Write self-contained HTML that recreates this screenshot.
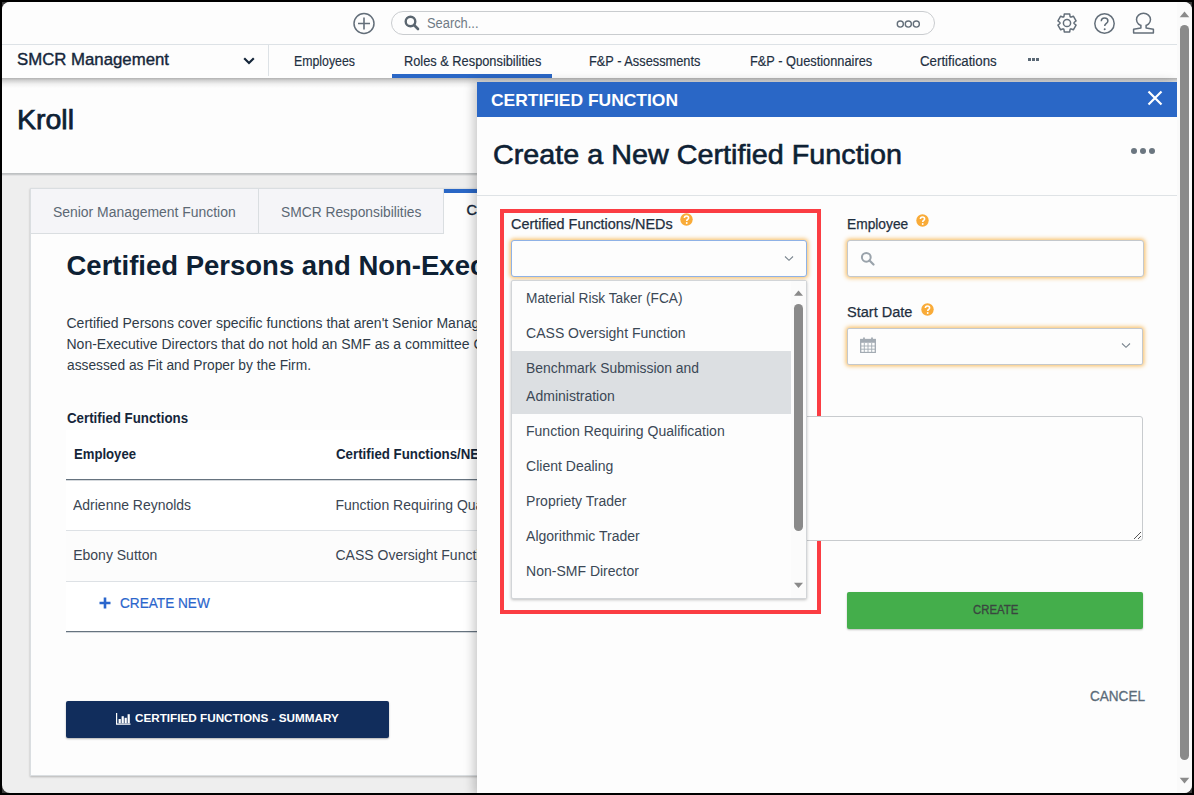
<!DOCTYPE html>
<html><head><meta charset="utf-8">
<style>
html,body{margin:0;padding:0;background:#000;width:1194px;height:795px;overflow:hidden;}
*{box-sizing:border-box;}
#frame{position:absolute;left:2px;top:2px;width:1190px;height:791px;border-radius:8px;overflow:hidden;background:#eeeeee;}
#root{position:absolute;left:-2px;top:-2px;width:1194px;height:795px;font-family:"Liberation Sans",sans-serif;}
.abs{position:absolute;}
.tx{position:absolute;white-space:nowrap;transform-origin:0 0;font-family:"Liberation Sans",sans-serif;}
</style></head>
<body>
<div style="position:absolute;left:2px;top:2px;width:8px;height:8px;background:#3c3c3c"></div>
<div style="position:absolute;left:1184px;top:2px;width:8px;height:8px;background:#3c3c3c"></div>
<div style="position:absolute;left:2px;top:785px;width:8px;height:8px;background:#3c3c3c"></div>
<div style="position:absolute;left:1184px;top:785px;width:8px;height:8px;background:#3c3c3c"></div>
<div id="frame"><div id="root">
  <!-- top header -->
  <div class="abs" style="left:0;top:0;width:1177px;height:78px;background:#fdfdfd;"></div>
  <div class="abs" style="left:0;top:44px;width:1177px;height:1px;background:#dde2e6;"></div>
  <!-- page header -->
  <div class="abs" style="left:0;top:78px;width:1177px;height:95px;background:#fdfdfd;"></div>
  <div class="abs" style="left:0;top:173px;width:1177px;height:3px;background:linear-gradient(#b9bcbe,#c9cbcc 50%,#eeeeee);"></div>
  <!-- nav shadow -->
  <div class="abs" style="left:0;top:78px;width:1177px;height:10px;background:linear-gradient(rgba(0,0,0,.3),rgba(0,0,0,.17) 25%,rgba(0,0,0,.05) 60%,rgba(0,0,0,0));"></div>
  <!-- plus icon -->
  <svg class="abs" style="left:352px;top:12px" width="24" height="24" viewBox="0 0 24 24">
    <circle cx="12" cy="11.5" r="10" fill="none" stroke="#646f7a" stroke-width="1.5"/>
    <path d="M12 5.5V17.5M6 11.5H18" stroke="#646f7a" stroke-width="1.6"/>
  </svg>
  <!-- search bar -->
  <div class="abs" style="left:391px;top:11px;width:544px;height:24px;border:1px solid #c9cccf;border-radius:12px;background:#fdfdfd;"></div>
  <svg class="abs" style="left:404px;top:15px" width="16" height="16" viewBox="0 0 16 16">
    <circle cx="6.5" cy="6.5" r="4.8" fill="none" stroke="#5b6670" stroke-width="2.4"/>
    <path d="M10 10L14 14" stroke="#5b6670" stroke-width="2.6" stroke-linecap="round"/>
  </svg>
  <svg class="abs" style="left:896px;top:20px" width="26" height="9" viewBox="0 0 26 9">
    <circle cx="4.3" cy="4" r="3.05" fill="none" stroke="#646f7a" stroke-width="1.35"/>
    <circle cx="12.3" cy="4" r="3.05" fill="none" stroke="#646f7a" stroke-width="1.35"/>
    <circle cx="20.3" cy="4" r="3.05" fill="none" stroke="#646f7a" stroke-width="1.35"/>
  </svg>
  <!-- gear -->
  <svg class="abs" style="left:1055.7px;top:12.2px" width="22" height="22" viewBox="0 0 22 22">
    <path d="M7.99 4.24 L8.28 2.11 L13.72 2.11 L14.01 4.24 Q14.25 5.37 15.35 5.01 L17.34 4.20 L20.06 8.91 L18.36 10.23 Q17.50 11.00 18.36 11.77 L20.06 13.09 L17.34 17.80 L15.35 16.99 Q14.25 16.63 14.01 17.76 L13.72 19.89 L8.28 19.89 L7.99 17.76 Q7.75 16.63 6.65 16.99 L4.66 17.80 L1.94 13.09 L3.64 11.77 Q4.50 11.00 3.64 10.23 L1.94 8.91 L4.66 4.20 L6.65 5.01 Q7.75 5.37 7.99 4.24Z" fill="none" stroke="#646f7a" stroke-width="1.5" stroke-linejoin="round"/>
    <circle cx="11" cy="11" r="3.6" fill="none" stroke="#646f7a" stroke-width="1.5"/>
  </svg>
  <!-- help -->
  <svg class="abs" style="left:1093px;top:12px" width="23" height="23" viewBox="0 0 23 23">
    <circle cx="11.5" cy="11.5" r="9.7" fill="none" stroke="#646f7a" stroke-width="1.5"/>
    <path d="M8.3 9.2c0-2 1.4-3.3 3.3-3.3s3.3 1.2 3.3 3c0 2.6-3.2 2.4-3.2 5.2" fill="none" stroke="#5f6b76" stroke-width="1.5"/>
    <circle cx="11.7" cy="17.2" r="1" fill="#5f6b76"/>
  </svg>
  <!-- user -->
  <svg class="abs" style="left:1132px;top:12px" width="23" height="23" viewBox="0 0 23 23">
    <path d="M8.5 17.3c-2-1.2-3.2-3.4-3.2-6 0-3.8 2.7-10.2 6.2-10.2s6.2 2.4 6.2 6.2c0 2.8-1.2 4.8-3.2 6v1.1l5.5 1.2v5.5H1.2v-5.5l7.3-1.2z" fill="none" stroke="none"/>
    <ellipse cx="11.5" cy="7.6" rx="7" ry="6.4" fill="none" stroke="#646f7a" stroke-width="1.5"/>
    <path d="M8.9 13v3L1.6 17.2v3.7h19.8v-3.7l-7.3-1.2V13" fill="#fdfdfd" stroke="#646f7a" stroke-width="1.5" stroke-linejoin="round"/>
  </svg>
  <!-- nav -->
  <svg class="abs" style="left:243px;top:57px" width="12" height="8" viewBox="0 0 12 8">
    <path d="M1.2 1.3L6 6L10.8 1.3" fill="none" stroke="#15263a" stroke-width="2.2"/>
  </svg>
  <div class="abs" style="left:268px;top:45px;width:1px;height:31px;background:#dde2e6;"></div>
  <div class="abs" style="left:392px;top:74px;width:160px;height:4px;background:#2a67c6;"></div>
  <div class="abs" style="left:1028px;top:58px;width:3px;height:3px;background:#5a6875;"></div>
  <div class="abs" style="left:1032px;top:58px;width:3px;height:3px;background:#5a6875;"></div>
  <div class="abs" style="left:1036px;top:58px;width:3px;height:3px;background:#5a6875;"></div>

  <!-- card -->
  <div class="abs" style="left:30px;top:188px;width:600px;height:588px;background:#fdfdfd;border:1px solid #dadee1;box-shadow:0 1px 2px rgba(0,0,0,.25);"></div>
  <div class="abs" style="left:31px;top:189px;width:413px;height:45px;background:#f5f5f8;border-bottom:1px solid #dadee1;"></div>
  <div class="abs" style="left:258px;top:189px;width:1px;height:45px;background:#dadee1;"></div>
  <div class="abs" style="left:443px;top:189px;width:1px;height:45px;background:#dadee1;"></div>
  <div class="abs" style="left:444px;top:189px;width:200px;height:4px;background:#2a67c6;"></div>
  <!-- table -->
  <div class="abs" style="left:66px;top:430px;width:500px;height:201px;background:#ffffff;"></div>
  <div class="abs" style="left:66px;top:479px;width:500px;height:1px;background:#66737f;"></div><div class="abs" style="left:66px;top:480px;width:500px;height:1px;background:#d5d9dd;"></div>
  <div class="abs" style="left:66px;top:530px;width:500px;height:1px;background:#dde1e5;"></div>
  <div class="abs" style="left:66px;top:530px;width:500px;height:51px;background:#fcfcfc;"></div>
  <div class="abs" style="left:66px;top:530px;width:500px;height:1px;background:#dde1e5;"></div>
  <div class="abs" style="left:66px;top:581px;width:500px;height:1px;background:#dde1e5;"></div>
  <div class="abs" style="left:66px;top:631px;width:500px;height:1px;background:#66737f;"></div><div class="abs" style="left:66px;top:632px;width:500px;height:1px;background:#d5d9dd;"></div>
  <svg class="abs" style="left:99px;top:597px" width="12" height="12" viewBox="0 0 12 12">
    <path d="M6 0.5V11.5M0.5 6H11.5" stroke="#2b66cc" stroke-width="2.6"/>
  </svg>
  <!-- summary button -->
  <div class="abs" style="left:66px;top:701px;width:323px;height:37px;background:#112d5c;border-radius:2px;box-shadow:0 1px 2px rgba(0,0,0,.3);"></div>
  <svg class="abs" style="left:115.5px;top:712.5px" width="15" height="12" viewBox="0 0 15 12">
    <path d="M0.6 0V11.1H14.5" fill="none" stroke="#fff" stroke-width="1.2"/>
    <rect x="2.6" y="6" width="2.2" height="4.3" fill="#fff"/>
    <rect x="5.6" y="3.2" width="2.2" height="7.1" fill="#fff"/>
    <rect x="8.6" y="4.8" width="2.2" height="5.5" fill="#fff"/>
    <rect x="11.6" y="1.2" width="2.2" height="9.1" fill="#fff"/>
  </svg>
<div class='tx' style='left:426.5px;top:16.15px;font-size:14px;line-height:14px;font-weight:400;color:#6f7a85;transform:scaleX(0.9191);'>Search...</div>
<div class='tx' style='left:17.0px;top:50.77px;font-size:17.4px;line-height:17.4px;font-weight:400;color:#15263a;transform:scaleX(0.9648);-webkit-text-stroke:0.4px #15263a;'>SMCR Management</div>
<div class='tx' style='left:293.5px;top:54.15px;font-size:14px;line-height:14px;font-weight:400;color:#1f3042;transform:scaleX(0.8807);-webkit-text-stroke:0.18px #1f3042;'>Employees</div>
<div class='tx' style='left:403.5px;top:54.15px;font-size:14px;line-height:14px;font-weight:400;color:#1f3042;transform:scaleX(0.9142);-webkit-text-stroke:0.18px #1f3042;'>Roles &amp; Responsibilities</div>
<div class='tx' style='left:589.0px;top:54.15px;font-size:14px;line-height:14px;font-weight:400;color:#1f3042;transform:scaleX(0.9138);-webkit-text-stroke:0.18px #1f3042;'>F&amp;P - Assessments</div>
<div class='tx' style='left:749.5px;top:54.15px;font-size:14px;line-height:14px;font-weight:400;color:#1f3042;transform:scaleX(0.9147);-webkit-text-stroke:0.18px #1f3042;'>F&amp;P - Questionnaires</div>
<div class='tx' style='left:920.3px;top:54.15px;font-size:14px;line-height:14px;font-weight:400;color:#1f3042;transform:scaleX(0.9478);-webkit-text-stroke:0.18px #1f3042;'>Certifications</div>
<div class='tx' style='left:17.0px;top:104.87px;font-size:28.5px;line-height:28.5px;font-weight:400;color:#0e2134;transform:scaleX(0.9997);-webkit-text-stroke:0.75px #0e2134;'>Kroll</div>
<div class='tx' style='left:52.5px;top:204.75px;font-size:14px;line-height:14px;font-weight:400;color:#5c6874;transform:scaleX(0.9947);'>Senior Management Function</div>
<div class='tx' style='left:281.0px;top:204.75px;font-size:14px;line-height:14px;font-weight:400;color:#5c6874;transform:scaleX(0.9853);'>SMCR Responsibilities</div>
<div class='tx' style='left:466.5px;top:203.33px;font-size:14.5px;line-height:14.5px;font-weight:400;color:#15263a;-webkit-text-stroke:0.45px #15263a;'>Certified Persons and Non-Executive Directors</div>
<div class='tx' style='left:66.5px;top:252.32px;font-size:27.5px;line-height:27.5px;font-weight:700;color:#0e2134;'>Certified Persons and Non-Executive Directors</div>
<div class='tx' style='left:66.5px;top:316.15px;font-size:14px;line-height:14px;font-weight:400;color:#2f3b48;'>Certified Persons cover specific functions that aren't Senior Management Functions</div>
<div class='tx' style='left:66.5px;top:337.15px;font-size:14px;line-height:14px;font-weight:400;color:#2f3b48;'>Non-Executive Directors that do not hold an SMF as a committee Chair must also be</div>
<div class='tx' style='left:66.5px;top:358.15px;font-size:14px;line-height:14px;font-weight:400;color:#2f3b48;transform:scaleX(0.9830);'>assessed as Fit and Proper by the Firm.</div>
<div class='tx' style='left:66.5px;top:410.75px;font-size:14px;line-height:14px;font-weight:700;color:#15263a;transform:scaleX(0.9493);'>Certified Functions</div>
<div class='tx' style='left:73.5px;top:447.15px;font-size:14px;line-height:14px;font-weight:700;color:#15263a;transform:scaleX(0.9374);'>Employee</div>
<div class='tx' style='left:335.5px;top:447.15px;font-size:14px;line-height:14px;font-weight:700;color:#15263a;transform:scaleX(0.9491);'>Certified Functions/NEDs</div>
<div class='tx' style='left:73.2px;top:498.35px;font-size:14px;line-height:14px;font-weight:400;color:#3a4552;transform:scaleX(0.9983);'>Adrienne Reynolds</div>
<div class='tx' style='left:335.5px;top:498.35px;font-size:14px;line-height:14px;font-weight:400;color:#3a4552;'>Function Requiring Qualification</div>
<div class='tx' style='left:73.2px;top:548.45px;font-size:14px;line-height:14px;font-weight:400;color:#3a4552;'>Ebony Sutton</div>
<div class='tx' style='left:335.5px;top:548.45px;font-size:14px;line-height:14px;font-weight:400;color:#3a4552;'>CASS Oversight Function</div>
<div class='tx' style='left:119.6px;top:595.73px;font-size:14.5px;line-height:14.5px;font-weight:400;color:#2b66cc;transform:scaleX(0.9392);-webkit-text-stroke:0.2px #2b66cc;'>CREATE NEW</div>
<div class='tx' style='left:135.0px;top:713.01px;font-size:11.8px;line-height:11.8px;font-weight:700;color:#ffffff;transform:scaleX(0.9924);'>CERTIFIED FUNCTIONS - SUMMARY</div>

  <!-- modal -->
  <div class="abs" style="left:477px;top:82px;width:700px;height:713px;background:#fdfdfd;box-shadow:-3px 0 10px rgba(0,0,0,.22);"></div>
  <div class="abs" style="left:477px;top:82px;width:700px;height:35px;background:#2a67c6;"></div>
  <svg class="abs" style="left:1147px;top:90px" width="16" height="16" viewBox="0 0 16 16">
    <path d="M1.5 1.5L14.5 14.5M14.5 1.5L1.5 14.5" stroke="#fff" stroke-width="2.2"/>
  </svg>
  <svg class="abs" style="left:1130px;top:147px" width="26" height="8" viewBox="0 0 26 8">
    <circle cx="4" cy="4" r="3" fill="#6b7680"/><circle cx="13" cy="4" r="3" fill="#6b7680"/><circle cx="22" cy="4" r="3" fill="#6b7680"/>
  </svg>
  <div class="abs" style="left:477px;top:195px;width:700px;height:1px;background:#dfe3e6;"></div>

  <!-- red box -->
  <div class="abs" style="left:500px;top:209px;width:321px;height:405px;border:4px solid #fb3d43;"></div>
  <!-- help icons -->
  <svg class="abs" style="left:680px;top:213.4px" width="13" height="13" viewBox="0 0 13 13">
    <circle cx="6.5" cy="6.5" r="6.2" fill="#f9ab38"/>
    <path d="M4.4 5.1c0-1.3.9-2.1 2.1-2.1s2.1.8 2.1 1.9c0 1.5-1.9 1.5-1.9 3" fill="none" stroke="#fff" stroke-width="1.6"/>
    <circle cx="6.7" cy="10" r=".95" fill="#fff"/>
  </svg>
  <svg class="abs" style="left:915.5px;top:213.5px" width="13" height="13" viewBox="0 0 13 13">
    <circle cx="6.5" cy="6.5" r="6.2" fill="#f9ab38"/>
    <path d="M4.4 5.1c0-1.3.9-2.1 2.1-2.1s2.1.8 2.1 1.9c0 1.5-1.9 1.5-1.9 3" fill="none" stroke="#fff" stroke-width="1.6"/>
    <circle cx="6.7" cy="10" r=".95" fill="#fff"/>
  </svg>
  <svg class="abs" style="left:920.5px;top:302.5px" width="13" height="13" viewBox="0 0 13 13">
    <circle cx="6.5" cy="6.5" r="6.2" fill="#f9ab38"/>
    <path d="M4.4 5.1c0-1.3.9-2.1 2.1-2.1s2.1.8 2.1 1.9c0 1.5-1.9 1.5-1.9 3" fill="none" stroke="#fff" stroke-width="1.6"/>
    <circle cx="6.7" cy="10" r=".95" fill="#fff"/>
  </svg>
  <!-- select input -->
  <div class="abs" style="left:511px;top:240px;width:296px;height:37px;border:1px solid #8fb2e6;border-radius:3px;background:#fdfdfd;box-shadow:0 0 4px 1px rgba(247,170,50,.8);"></div>
  <svg class="abs" style="left:784px;top:255px" width="10" height="7" viewBox="0 0 10 7">
    <path d="M1 1.5L5 5.3L9 1.5" fill="none" stroke="#77828c" stroke-width="1.05"/>
  </svg>
  <!-- employee input -->
  <div class="abs" style="left:847px;top:240px;width:297px;height:37px;border:1px solid #c4c8cc;border-radius:3px;background:#fdfdfd;box-shadow:0 0 4px 1px rgba(247,170,50,.8);"></div>
  <svg class="abs" style="left:860px;top:251px" width="16" height="15" viewBox="0 0 16 15">
    <circle cx="6.3" cy="6.3" r="4.4" fill="none" stroke="#9aa3ab" stroke-width="2"/>
    <path d="M9.5 9.5L13.5 13.5" stroke="#9aa3ab" stroke-width="2.2" stroke-linecap="round"/>
  </svg>
  <!-- date input -->
  <div class="abs" style="left:847px;top:328px;width:296px;height:37px;border:1px solid #c4c8cc;border-radius:2px;background:#fdfdfd;box-shadow:0 0 4px 1px rgba(247,170,50,.8);"></div>
  <svg class="abs" style="left:860px;top:337px" width="16" height="16" viewBox="0 0 16 16">
    <rect x="0.7" y="2.5" width="14.6" height="13" fill="none" stroke="#a3abb3" stroke-width="1.3"/>
    <rect x="0.7" y="2.5" width="14.6" height="3.3" fill="#a3abb3"/>
    <path d="M4 0.5V4M12 0.5V4" stroke="#a3abb3" stroke-width="1.8"/>
    <path d="M4.3 6v9.5M8 6v9.5M11.7 6v9.5M0.7 9H15.3M0.7 12.2H15.3" stroke="#a3abb3" stroke-width="0.9"/>
  </svg>
  <svg class="abs" style="left:1121px;top:342px" width="10" height="7" viewBox="0 0 10 7">
    <path d="M1 1.5L5 5.3L9 1.5" fill="none" stroke="#77828c" stroke-width="1.05"/>
  </svg>
  <!-- textarea -->
  <div class="abs" style="left:511px;top:416px;width:632px;height:125px;border:1px solid #c8cbce;border-radius:3px;background:#fdfdfd;"></div>
  <svg class="abs" style="left:1132px;top:530px" width="10" height="10" viewBox="0 0 10 10">
    <path d="M9 2L2 9M9 6L6 9" stroke="#555" stroke-width="1"/>
  </svg>
  <!-- dropdown list -->
  <div class="abs" style="left:511px;top:280px;width:296px;height:319px;border:1px solid #d2d5d8;border-radius:2px;background:#fdfdfd;box-shadow:0 1px 3px rgba(0,0,0,.25);"></div>
  <div class="abs" style="left:512px;top:351px;width:279px;height:63px;background:#dcdfe2;"></div>
  <div class="abs" style="left:791px;top:281px;width:15px;height:317px;background:#fbfbfb;"></div>
  <svg class="abs" style="left:793px;top:290px" width="11" height="7" viewBox="0 0 11 7"><path d="M5.5 0.5L10 5.8H1z" fill="#8a8a8a"/></svg>
  <div class="abs" style="left:794px;top:304px;width:9px;height:227px;border-radius:4.5px;background:#8a8a8a;"></div>
  <svg class="abs" style="left:793px;top:582px" width="11" height="7" viewBox="0 0 11 7"><path d="M1 0.8H10L5.5 6z" fill="#8a8a8a"/></svg>
  <!-- create button -->
  <div class="abs" style="left:847px;top:592px;width:296px;height:37px;background:#44ae4b;border-radius:2px;box-shadow:0 1px 2px rgba(0,0,0,.25);"></div>
<div class='tx' style='left:491.2px;top:92.41px;font-size:17px;line-height:17px;font-weight:700;color:#ffffff;transform:scaleX(1.0259);'>CERTIFIED FUNCTION</div>
<div class='tx' style='left:492.5px;top:141.32px;font-size:27.5px;line-height:27.5px;font-weight:400;color:#0e2134;transform:scaleX(1.0452);-webkit-text-stroke:0.6px #0e2134;'>Create a New Certified Function</div>
<div class='tx' style='left:511.2px;top:217.05px;font-size:14px;line-height:14px;font-weight:400;color:#1f2f40;transform:scaleX(1.0282);-webkit-text-stroke:0.25px #1f2f40;'>Certified Functions/NEDs</div>
<div class='tx' style='left:847.2px;top:217.45px;font-size:14px;line-height:14px;font-weight:400;color:#1f2f40;transform:scaleX(0.9829);-webkit-text-stroke:0.25px #1f2f40;'>Employee</div>
<div class='tx' style='left:847.2px;top:305.15px;font-size:14px;line-height:14px;font-weight:400;color:#1f2f40;transform:scaleX(1.0376);-webkit-text-stroke:0.25px #1f2f40;'>Start Date</div>
<div class='tx' style='left:526.1px;top:291.45px;font-size:14px;line-height:14px;font-weight:400;color:#3b4856;transform:scaleX(0.9781);'>Material Risk Taker (FCA)</div>
<div class='tx' style='left:526.1px;top:326.45px;font-size:14px;line-height:14px;font-weight:400;color:#3b4856;'>CASS Oversight Function</div>
<div class='tx' style='left:526.1px;top:361.15px;font-size:14px;line-height:14px;font-weight:400;color:#3b4856;transform:scaleX(0.9925);'>Benchmark Submission and</div>
<div class='tx' style='left:526.1px;top:389.15px;font-size:14px;line-height:14px;font-weight:400;color:#3b4856;'>Administration</div>
<div class='tx' style='left:526.1px;top:424.15px;font-size:14px;line-height:14px;font-weight:400;color:#3b4856;transform:scaleX(1.0012);'>Function Requiring Qualification</div>
<div class='tx' style='left:526.1px;top:459.15px;font-size:14px;line-height:14px;font-weight:400;color:#3b4856;'>Client Dealing</div>
<div class='tx' style='left:526.1px;top:494.15px;font-size:14px;line-height:14px;font-weight:400;color:#3b4856;'>Propriety Trader</div>
<div class='tx' style='left:526.1px;top:529.45px;font-size:14px;line-height:14px;font-weight:400;color:#3b4856;'>Algorithmic Trader</div>
<div class='tx' style='left:526.1px;top:563.95px;font-size:14px;line-height:14px;font-weight:400;color:#3b4856;'>Non-SMF Director</div>
<div class='tx' style='left:972.5px;top:603.99px;font-size:12.3px;line-height:12.3px;font-weight:400;color:#3a4540;transform:scaleX(0.9251);-webkit-text-stroke:0.3px #3a4540;'>CREATE</div>
<div class='tx' style='left:1089.9px;top:689.05px;font-size:14px;line-height:14px;font-weight:400;color:#5b6b79;transform:scaleX(0.9684);-webkit-text-stroke:0.3px #5b6b79;'>CANCEL</div>

  <!-- scrollbar -->
  <div class="abs" style="left:1177px;top:0;width:17px;height:795px;background:#fafafa;"></div>
  <svg class="abs" style="left:1179px;top:11px" width="11" height="7" viewBox="0 0 11 7"><path d="M5.5 0.5L10.3 6.2H0.7z" fill="#8a8a8a"/></svg>
  <div class="abs" style="left:1180px;top:25px;width:9px;height:735px;border-radius:4.5px;background:#8a8a8a;"></div>
  <svg class="abs" style="left:1179px;top:777px" width="11" height="7" viewBox="0 0 11 7"><path d="M0.7 0.8H10.3L5.5 6.5z" fill="#8a8a8a"/></svg>
</div></div>
</body></html>
